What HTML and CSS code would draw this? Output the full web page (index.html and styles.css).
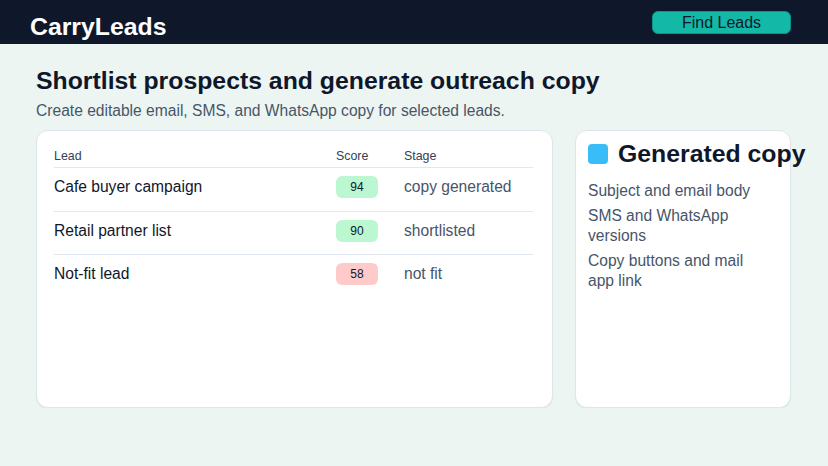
FILE: index.html
```html
<!DOCTYPE html>
<html lang="en">
<head>
    <meta charset="UTF-8">
    <meta name="viewport" content="width=device-width, initial-scale=1.0">
    <title>CarryLeads - Outreach copy</title>
    <link rel="stylesheet" href="styles.css">
</head>
<body>
    <header class="topbar">
        <div class="brand">CarryLeads</div>
        <button class="find-button" type="button">Find Leads</button>
    </header>

    <main class="page">
        <h1 class="page-title">Shortlist prospects and generate outreach copy</h1>
        <p class="page-sub">Create editable email, SMS, and WhatsApp copy for selected leads.</p>

        <div class="panels">
            <section class="card leads-card">
                <table class="leads">
                    <thead>
                        <tr>
                            <th class="col-lead">Lead</th>
                            <th class="col-score">Score</th>
                            <th>Stage</th>
                        </tr>
                    </thead>
                    <tbody>
                        <tr>
                            <td class="col-lead">Cafe buyer campaign</td>
                            <td class="col-score"><span class="score good">94</span></td>
                            <td class="stage">copy generated</td>
                        </tr>
                        <tr>
                            <td class="col-lead">Retail partner list</td>
                            <td class="col-score"><span class="score good">90</span></td>
                            <td class="stage">shortlisted</td>
                        </tr>
                        <tr>
                            <td class="col-lead">Not-fit lead</td>
                            <td class="col-score"><span class="score bad">58</span></td>
                            <td class="stage">not fit</td>
                        </tr>
                    </tbody>
                </table>
            </section>

            <section class="card copy-card">
                <div class="copy-head">
                    <span class="copy-icon"></span>
                    <h2>Generated copy</h2>
                </div>
                <ul class="copy-list">
                    <li>Subject and email body</li>
                    <li>SMS and WhatsApp versions</li>
                    <li>Copy buttons and mail app link</li>
                </ul>
            </section>
        </div>
    </main>
</body>
</html>
```

FILE: styles.css
```css
body {
    margin: 0;
    font-family: "Liberation Sans", Arial, sans-serif;
    background-color: #edf5f2;
    color: #0f172a;
}
.topbar {
    height: 44px;
    background-color: #0f172a;
    display: flex;
    align-items: center;
    justify-content: space-between;
    padding: 0 37px 0 30px;
}
.brand {
    color: white;
    font-size: 24.8px;
    font-weight: bold;
    padding-top: 9px;
}
.find-button {
    width: 139px;
    height: 23px;
    margin-top: 1px;
    background-color: #14b8a6;
    border: 1px solid #0d9488;
    border-radius: 6px;
    color: #0f172a;
    font-family: "Liberation Sans", Arial, sans-serif;
    font-size: 16px;
    padding: 0;
    cursor: pointer;
}
.page {
    padding: 22px 37px 0 36px;
}
.page-title {
    font-size: 24.8px;
    margin: 0;
    line-height: 30px;
}
.page-sub {
    margin: 5px 0 0;
    font-size: 15.6px;
    color: #475569;
    line-height: 20px;
}
.panels {
    display: grid;
    grid-template-columns: 517px minmax(0, 1fr);
    gap: 22px;
    margin-top: 9px;
}
.card {
    background-color: white;
    border: 1px solid #dde6ea;
    border-radius: 12px;
    height: 278px;
    box-sizing: border-box;
    box-shadow: 0 1px 1px rgba(15, 23, 42, 0.06);
}
.leads-card {
    padding: 14px 19px 0 17px;
}
.leads {
    width: 100%;
    border-collapse: collapse;
}
.leads th {
    text-align: left;
    font-weight: normal;
    font-size: 12.4px;
    color: #334155;
    height: 22px;
    padding: 0;
    vertical-align: middle;
    border-bottom: 1px solid #e2e8f0;
}
.leads td {
    font-size: 15.6px;
    height: 38.5px;
    padding: 0 0 4px;
    border-bottom: 1px solid #e2e8f0;
}
.leads tr:last-child td {
    border-bottom: none;
}
.col-lead {
    width: 282px;
}
.col-score {
    width: 68px;
}
.stage {
    color: #475569;
}
.score {
    display: inline-block;
    width: 42px;
    height: 22px;
    line-height: 22px;
    text-align: center;
    font-size: 12px;
    border-radius: 6px;
}
.score.good {
    background-color: #bbf7d0;
}
.score.bad {
    background-color: #fecaca;
}
.copy-card {
    padding: 11px 12px;
}
.copy-head {
    display: flex;
    align-items: center;
    gap: 10px;
    white-space: nowrap;
}
.copy-icon {
    width: 20px;
    height: 20px;
    border-radius: 4px;
    background-color: #38bdf8;
    flex-shrink: 0;
}
.copy-head h2 {
    margin: 0;
    font-size: 24.8px;
    line-height: 24px;
}
.copy-list {
    list-style: none;
    margin: 15px 0 0;
    padding: 0;
    max-width: 176px;
    color: #475569;
    font-size: 15.6px;
    line-height: 20px;
}
.copy-list li {
    margin-bottom: 5px;
}
```
